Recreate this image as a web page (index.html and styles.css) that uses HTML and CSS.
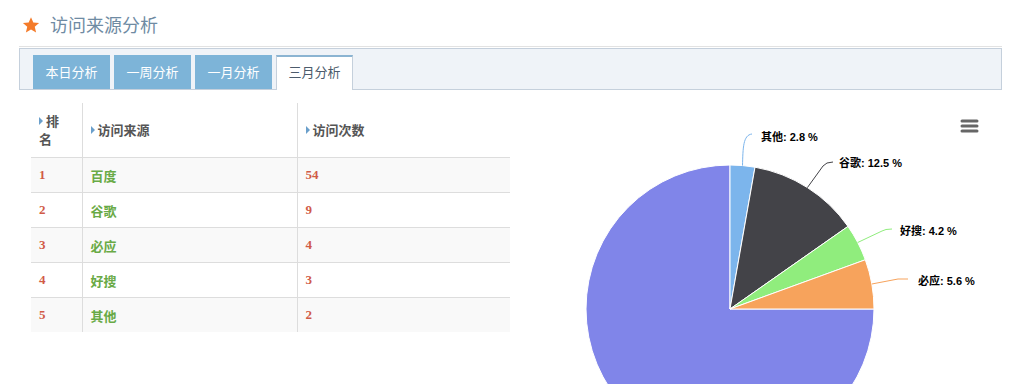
FILE: index.html
```html
<!DOCTYPE html>
<html lang="zh-CN">
<head>
  <meta charset="UTF-8">
  <title>访问来源分析</title>
  <link rel="stylesheet" href="styles.css">
</head>
<body>
  <div class="page">
    <div class="page-header">
      <svg class="star" width="18" height="18" viewBox="0 0 24 24">
        <path d="M12 1.5l3.1 7.1 7.7.7-5.8 5.1 1.8 7.6L12 18l-6.8 4 1.8-7.6L1.2 9.3l7.7-.7z" fill="#f47b2a"/>
      </svg>
      <h1>访问来源分析</h1>
    </div>

    <div class="tab-bar">
      <a class="tab">本日分析</a>
      <a class="tab">一周分析</a>
      <a class="tab">一月分析</a>
      <a class="tab active">三月分析</a>
    </div>

    <div class="content">
      <div class="col-left">
        <table class="source-table">
          <colgroup>
            <col style="width:51px">
            <col style="width:215px">
            <col>
          </colgroup>
          <thead>
            <tr>
              <th><i class="caret"></i>排<br>名</th>
              <th><i class="caret"></i>访问来源</th>
              <th><i class="caret"></i>访问次数</th>
            </tr>
          </thead>
          <tbody>
            <tr><td class="num">1</td><td class="src">百度</td><td class="num">54</td></tr>
            <tr><td class="num">2</td><td class="src">谷歌</td><td class="num">9</td></tr>
            <tr><td class="num">3</td><td class="src">必应</td><td class="num">4</td></tr>
            <tr><td class="num">4</td><td class="src">好搜</td><td class="num">3</td></tr>
            <tr><td class="num">5</td><td class="src">其他</td><td class="num">2</td></tr>
          </tbody>
        </table>
      </div>

      <div class="col-right">
        <svg class="pie" width="492" height="281" viewBox="0 0 492 281">
          <!-- slices -->
          <path d="M220,206 L364,206 A144,144 0 1 1 220,62 Z" fill="#8085e9" stroke="#fff" stroke-width="1"/>
          <path d="M220,206 L220,62 A144,144 0 0 1 245,64.2 Z" fill="#7cb5ec" stroke="#fff" stroke-width="1"/>
          <path d="M220,206 L245,64.2 A144,144 0 0 1 337.96,123.4 Z" fill="#434348" stroke="#fff" stroke-width="1"/>
          <path d="M220,206 L337.96,123.4 A144,144 0 0 1 355.32,156.75 Z" fill="#90ed7d" stroke="#fff" stroke-width="1"/>
          <path d="M220,206 L355.32,156.75 A144,144 0 0 1 364,206 Z" fill="#f7a35c" stroke="#fff" stroke-width="1"/>

          <!-- connectors -->
          <path d="M232.5,62.5 C233,45 233,32 242,31" fill="none" stroke="#7cb5ec"/>
          <path d="M297.4,84.6 L313,63 Q316,59 323,59" fill="none" stroke="#434348"/>
          <path d="M347.7,139.5 L372,128 Q375,126 382,126" fill="none" stroke="#90ed7d"/>
          <path d="M361.8,181 L388,176 L398,176" fill="none" stroke="#f7a35c"/>

          <!-- labels -->
          <g class="pie-label">
            <text x="251" y="38">其他: 2.8 %</text>
            <text x="329" y="64">谷歌: 12.5 %</text>
            <text x="390" y="132">好搜: 4.2 %</text>
            <text x="408" y="182">必应: 5.6 %</text>
          </g>

          <!-- export menu -->
          <g stroke="#666" stroke-width="3" stroke-linecap="round">
            <line x1="452" y1="18" x2="467" y2="18"/>
            <line x1="452" y1="23" x2="467" y2="23"/>
            <line x1="452" y1="28" x2="467" y2="28"/>
          </g>
        </svg>
      </div>
    </div>
  </div>
</body>
</html>
```

FILE: styles.css
```css
html, body {
  margin: 0;
  height: 384px;
  overflow: hidden;
  background: #fff;
  font-family: "Open Sans", "Noto Sans CJK SC", sans-serif;
}

.page {
  margin: 0 18px 0 19px;
}

.page-header {
  display: flex;
  align-items: center;
  padding: 12px 0 8px 3px;
  border-bottom: 1px solid #e2e2e2;
  margin-bottom: 1px;
}

.page-header .star {
  display: block;
}

.page-header h1 {
  margin: 0 0 0 10px;
  font-size: 18px;
  line-height: 26px;
  font-weight: normal;
  color: #6f8ba3;
}

.tab-bar {
  display: flex;
  gap: 4px;
  height: 34px;
  padding: 6px 0 0 13px;
  background: #eff3f8;
  border: 1px solid #c5d0dc;
}

.tab {
  box-sizing: border-box;
  width: 77px;
  height: 34px;
  line-height: 33px;
  text-align: center;
  font-size: 13px;
  color: #fff;
  background: #7db4d8;
  border: 1px solid #7db4d8;
  border-bottom: none;
}

.tab.active {
  height: 35px;
  background: #fff;
  color: #4c5b6c;
  border-color: #c5d0dc;
  border-top: 2px solid #8bb4d2;
  line-height: 31px;
}

.content {
  display: flex;
  margin-top: 13px;
}

.col-left {
  width: 479px;
  padding-left: 12px;
}

.col-right {
  flex: 1;
}

.pie {
  display: block;
}

.pie-label text {
  font-family: "Liberation Sans", "Noto Sans CJK SC", sans-serif;
  font-size: 11px;
  font-weight: bold;
  fill: #000;
}

.source-table {
  width: 479px;
  table-layout: fixed;
  border-collapse: collapse;
  font-size: 13px;
}

.source-table th {
  height: 54px;
  padding: 0 8px;
  text-align: left;
  font-weight: bold;
  color: #555;
  line-height: 18px;
  vertical-align: middle;
}

.source-table th + th,
.source-table td + td {
  border-left: 1px solid #ddd;
}

.source-table td {
  height: 34px;
  padding: 0 8px;
  border-top: 1px solid #ddd;
  vertical-align: middle;
}

.source-table tbody tr:nth-child(odd) {
  background: #f9f9f9;
}

.caret {
  display: inline-block;
  width: 0;
  height: 0;
  margin-right: 3px;
  border-left: 4px solid #6a9fcb;
  border-top: 4px solid transparent;
  border-bottom: 4px solid transparent;
  vertical-align: 1px;
}

.source-table .num {
  font-family: "Liberation Serif", serif;
  font-weight: bold;
  color: #d15b47;
}

.source-table .src {
  font-weight: bold;
  color: #69aa46;
}
```
